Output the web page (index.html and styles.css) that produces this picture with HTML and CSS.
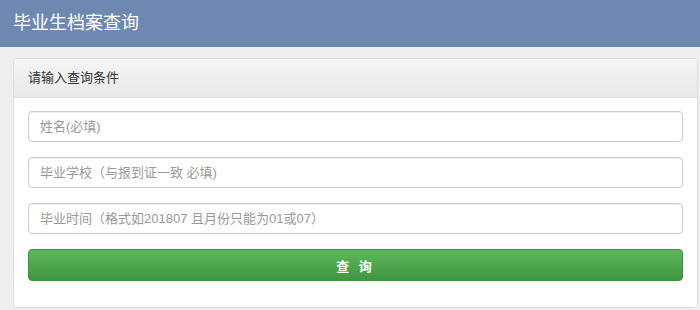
FILE: index.html
```html
<!DOCTYPE html>
<html>
<head>
    <meta charset="UTF-8">
    <meta name="viewport" content="width=device-width, initial-scale=1.0">
    <title>毕业生档案查询</title>
    <link rel="stylesheet" href="styles.css">
</head>
<body>
    <div class="header">毕业生档案查询</div>

    <div class="container">
        <div class="panel">
            <div class="panel-heading">请输入查询条件</div>
            <div class="panel-body">
                <div class="form-group">
                    <input type="text" class="form-control" placeholder="姓名(必填)">
                </div>
                <div class="form-group">
                    <input type="text" class="form-control" placeholder="毕业学校（与报到证一致 必填)">
                </div>
                <div class="form-group">
                    <input type="text" class="form-control" placeholder="毕业时间（格式如201807 且月份只能为01或07）">
                </div>
                <button class="btn-query">查 询</button>
            </div>
        </div>
    </div>
</body>
</html>
```

FILE: styles.css
```css
body {
    margin: 0;
    padding: 0;
    background-color: #eeeeee;
    font-family: "Liberation Sans", "Noto Sans CJK SC", sans-serif;
    font-size: 13px;
    color: #333;
}
.header {
    height: 47px;
    line-height: 46px;
    background-color: #6e88b2;
    color: #fff;
    font-size: 18px;
    padding-left: 13px;
}
.container {
    padding: 11px 2px 0 13px;
}
.panel {
    background-color: #fff;
    border: 1px solid #dddddd;
    border-radius: 4px;
}
.panel-heading {
    height: 38px;
    line-height: 38px;
    padding: 0 14px;
    color: #333;
    background-image: linear-gradient(to bottom, #f5f5f5, #e8e8e8);
    border-bottom: 1px solid #dddddd;
    border-radius: 3px 3px 0 0;
}
.panel-body {
    padding: 13px 14px 26px 14px;
}
.form-group {
    margin-bottom: 15px;
}
.form-control {
    display: block;
    box-sizing: border-box;
    width: 100%;
    height: 31px;
    padding: 0 11px;
    border: 1px solid #cccccc;
    border-radius: 4px;
    font-family: inherit;
    font-size: 13px;
    color: #555;
    box-shadow: inset 0 1px 1px rgba(0, 0, 0, 0.075);
    outline: none;
}
.form-control::placeholder {
    color: #999;
}
.btn-query {
    display: block;
    width: 100%;
    height: 32px;
    border: 1px solid #3e8f3e;
    border-radius: 4px;
    background-image: linear-gradient(to bottom, #5cb85c, #419641);
    color: #fff;
    font-family: inherit;
    font-size: 13px;
    font-weight: bold;
    letter-spacing: 3px;
    cursor: pointer;
}
```
